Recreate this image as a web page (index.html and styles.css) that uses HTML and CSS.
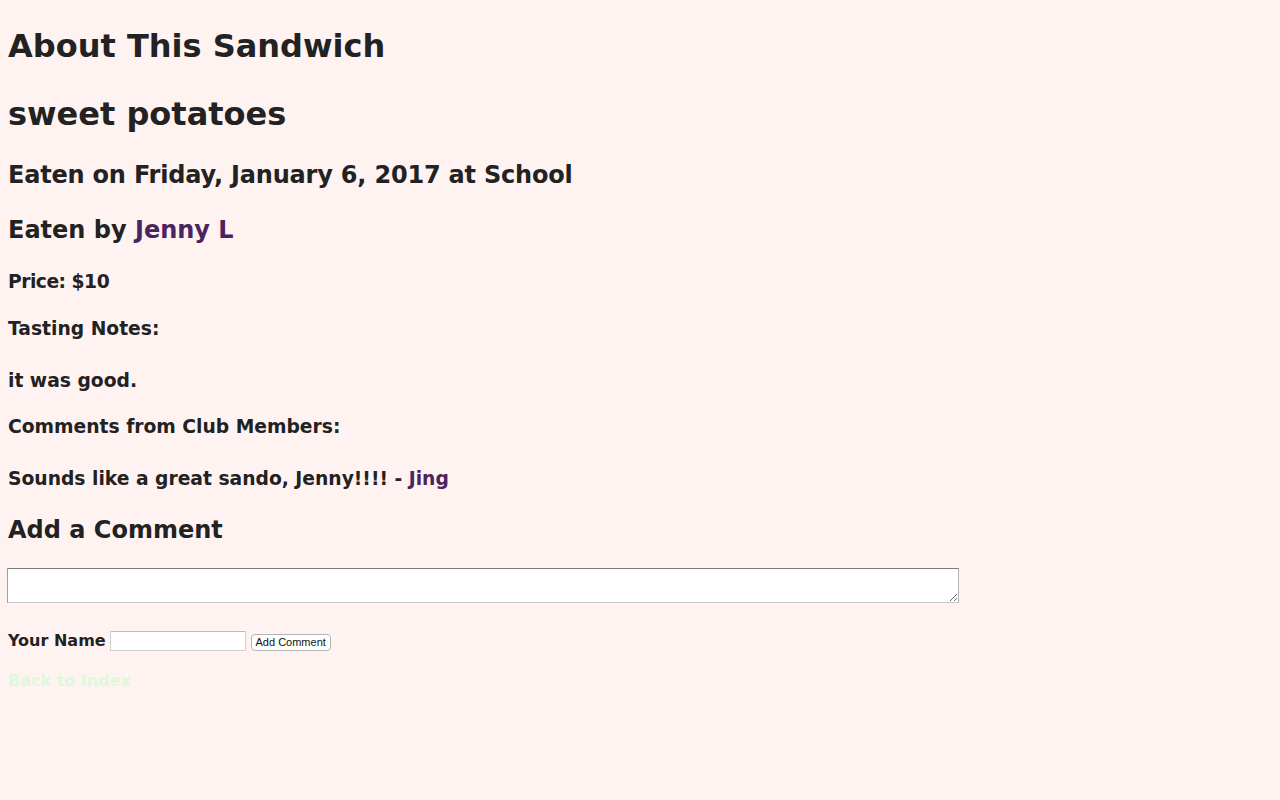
FILE: index.html
```html
<!DOCTYPE html>
<html lang="en">
<head>
<meta charset="utf-8">
<title>About This Sandwich</title>
<link rel="stylesheet" href="styles.css">
</head>
<body>
<main class="page">
  <h1 class="title">About This Sandwich</h1>
  <h1 class="name">sweet potatoes</h1>
  <h2 class="eaten-on">Eaten on Friday, January 6, 2017 at School</h2>
  <h2 class="eaten-by">Eaten by <a class="user" href="#">Jenny L</a></h2>
  <h3 class="price">Price: $10</h3>
  <h3 class="notes-label">Tasting Notes:</h3>
  <p class="notes">it was good.</p>
  <h3 class="comments-label">Comments from Club Members:</h3>
  <p class="comment">Sounds like a great sando, Jenny!!!! - <a class="user" href="#">Jing</a></p>
  <h2 class="add-title">Add a Comment</h2>
  <form class="comment-form">
    <textarea class="comment-box"></textarea>
    <div class="name-row">
      <label class="name-label" for="yname">Your Name</label>
      <input class="name-input" id="yname" type="text">
      <button class="submit" type="button">Add Comment</button>
    </div>
  </form>
  <a class="back" href="#">Back to Index</a>
</main>
</body>
</html>
```

FILE: styles.css
```css
html, body {
  margin: 0;
  padding: 0;
  background: #fff3f2;
}

body {
  font-family: "DejaVu Sans", sans-serif;
  font-weight: bold;
  color: #222222;
  font-size: 16px;
  line-height: 1.5;
}

.page {
  padding: 0 8px;
  display: flow-root;
}

h1, h2, h3, p {
  margin: 0;
  font-weight: bold;
}

h1 { font-size: 32px; }
h2 { font-size: 24px; }
h3, p { font-size: 18.72px; }

.eaten-on { letter-spacing: -0.2px; }
.price { letter-spacing: -0.5px; }

.title { margin-top: 22px; }
.name { margin-top: 20px; }
.eaten-on { margin-top: 18.7px; }
.eaten-by { margin-top: 19px; }
.price { margin-top: 20.8px; }
.notes-label { margin-top: 18.9px; }
.notes { margin-top: 23.9px; }
.comments-label { margin-top: 17.9px; }
.comment { margin-top: 23.9px; }
.add-title { margin-top: 18.1px; }

a.user {
  color: #4a2360;
  text-decoration: none;
}

.comment-form {
  margin-top: 20.3px;
  display: flex;
  flex-direction: column;
}

.comment-box {
  display: block;
  box-sizing: border-box;
  width: 952px;
  height: 35px;
  margin: 0 0 0 -1px;
  border: 1px solid;
  border-color: #7d7d7d #b4b4b4 #c8c8c8 #a0a0a0;
  background: #ffffff;
  padding: 2px;
  font-family: "Liberation Mono", monospace;
  font-size: 13px;
}

.name-row {
  margin-top: 28px;
  display: flex;
  align-items: flex-end;
  height: 20px;
}

.name-label {
  font-size: 16px;
  line-height: 20px;
  color: #222222;
}

.name-input {
  box-sizing: border-box;
  width: 136px;
  height: 20px;
  margin: 0 0 0 4px;
  border: 1px solid #cfcfcf;
  border-top-color: #bdbdbd;
  background: #ffffff;
  padding: 1px 3px;
  font-family: "Liberation Sans", sans-serif;
  font-size: 12px;
}

.submit {
  box-sizing: border-box;
  width: 80px;
  height: 17px;
  margin: 0 0 0 5px;
  padding: 0;
  border: 1px solid #b5b5b5;
  border-radius: 4px;
  background: #ffffff;
  color: #111111;
  font-family: "Liberation Sans", sans-serif;
  font-weight: normal;
  font-size: 11px;
  line-height: 15px;
}

.back {
  display: block;
  width: max-content;
  margin-top: 18.5px;
  font-size: 16px;
  line-height: 24px;
  color: #dcfadb;
  text-decoration: none;
}
```
